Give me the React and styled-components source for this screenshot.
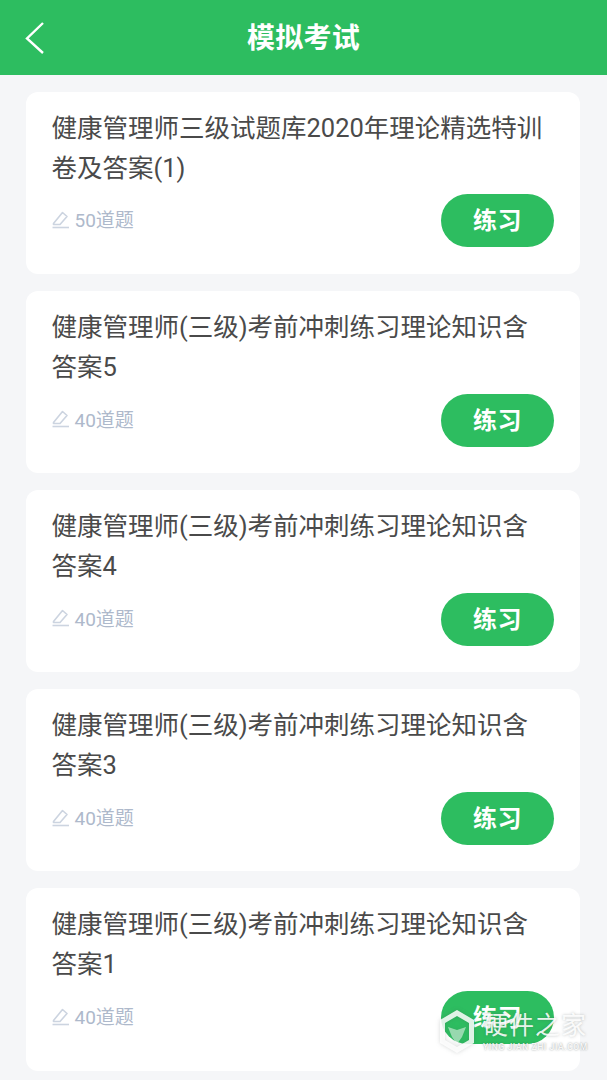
import React from 'react'
import styled, { createGlobalStyle } from 'styled-components'

const FONT = '"Roboto", "Noto Sans CJK SC", sans-serif'

const GlobalStyle = createGlobalStyle`
  html, body {
    margin: 0;
    padding: 0;
    height: 100%;
    overflow: hidden;
    background: #f5f6f8;
    font-family: ${FONT};
  }
`

const Page = styled.div`
  position: relative;
  width: 607px;
  height: 1080px;
  overflow: hidden;
  background: #f5f6f8;
`

const Header = styled.header`
  display: flex;
  align-items: center;
  justify-content: center;
  position: relative;
  height: 74.5px;
  background: #2dbd60;
`

const BackButton = styled.svg`
  position: absolute;
  left: 24px;
  top: 21px;
  width: 22px;
  height: 34px;
`

const Title = styled.h1`
  margin: 0 0 2px;
  font-size: 28px;
  font-weight: 700;
  letter-spacing: 0.3px;
  color: #fff;
`

const List = styled.main`
  display: flex;
  flex-direction: column;
  gap: 17px;
  padding: 17.2px 27px 0 26px;
`

const Card = styled.section`
  box-sizing: border-box;
  height: 182.2px;
  padding: 16px 26px 0 25.5px;
  background: #fff;
  border-radius: 12px;
`

const CardTitle = styled.div`
  padding-right: 6px;
  font-size: 25.5px;
  line-height: 40px;
  color: #4a4a4a;
`

const CardFooter = styled.div`
  display: flex;
  align-items: center;
  justify-content: space-between;
  margin-top: 6.8px;
`

const Meta = styled.div`
  display: flex;
  align-items: center;
  gap: 5px;
  margin-bottom: 4px;
  font-size: 19px;
  color: #aeb9cb;
`

const PracticeButton = styled.button`
  width: 113px;
  height: 53px;
  border: 0;
  padding: 0 0 4px;
  border-radius: 27px;
  background: #2dbd60;
  color: #fff;
  font-family: ${FONT};
  font-size: 24px;
  font-weight: 700;
  letter-spacing: 0.5px;
`

const Watermark = styled.div`
  position: absolute;
  left: 439px;
  top: 1009px;
  display: flex;
  align-items: center;
  gap: 8px;
  color: rgba(255, 255, 255, 0.9);
  text-shadow: 0 0 3px rgba(70, 80, 80, 0.35);
  pointer-events: none;
`

const WatermarkLogo = styled.svg`
  width: 36px;
  height: 45px;
  filter: drop-shadow(0 0 2px rgba(70, 80, 80, 0.25));
`

const WatermarkText = styled.div`
  display: flex;
  flex-direction: column;
  width: 104px;
`

const WatermarkName = styled.div`
  font-size: 25px;
  line-height: 30px;
  letter-spacing: 1px;
  white-space: nowrap;
`

const WatermarkUrl = styled.div`
  font-size: 8.5px;
  font-weight: 500;
  line-height: 12px;
  letter-spacing: 0.6px;
  white-space: nowrap;
  text-shadow: 0 0 2px rgba(70, 80, 80, 0.6);
`

const exams = [
  { title: '健康管理师三级试题库2020年理论精选特训卷及答案(1)', count: 50 },
  { title: '健康管理师(三级)考前冲刺练习理论知识含答案5', count: 40 },
  { title: '健康管理师(三级)考前冲刺练习理论知识含答案4', count: 40 },
  { title: '健康管理师(三级)考前冲刺练习理论知识含答案3', count: 40 },
  { title: '健康管理师(三级)考前冲刺练习理论知识含答案1', count: 40 },
]

function PenIcon () {
  return (
    <svg width="18" height="20" viewBox="0 0 18 20" fill="none" stroke="#ccd4e0" strokeWidth="1.6">
      <path d="M1.5 14.5 L10.5 3.5 L15 7.5 L8 15.5 H1.5 Z" strokeLinejoin="round" />
      <path d="M0.5 18.5 H17" />
    </svg>
  )
}

function ExamCard ({ title, count }) {
  return (
    <Card>
      <CardTitle>{title}</CardTitle>
      <CardFooter>
        <Meta>
          <PenIcon />
          {count}道题
        </Meta>
        <PracticeButton>练习</PracticeButton>
      </CardFooter>
    </Card>
  )
}

export default function App () {
  return (
    <Page>
      <GlobalStyle />
      <Header>
        <BackButton viewBox="0 0 22 34" fill="none" stroke="#fff" strokeWidth="2.4">
          <path d="M19 2 L3 17.5 L19 32" />
        </BackButton>
        <Title>模拟考试</Title>
      </Header>
      <List>
        {exams.map((exam, i) => (
          <ExamCard key={i} title={exam.title} count={exam.count} />
        ))}
      </List>
      <Watermark>
        <WatermarkLogo viewBox="0 0 36 45">
          <path d="M18 1 L35 11 V34 L18 44 L1 34 V11 Z M18 7 L6 14 V31 L18 38 L30 31 V14 Z" fill="rgba(255,255,255,0.85)" fillRule="evenodd" />
          <path d="M9 18 L18 21 L27 18 L23 28 L18 35 L13 28 Z" fill="rgba(255,255,255,0.5)" />
        </WatermarkLogo>
        <WatermarkText>
          <WatermarkName>硬件之家</WatermarkName>
          <WatermarkUrl>YING JIAN ZHI JIA.COM</WatermarkUrl>
        </WatermarkText>
      </Watermark>
    </Page>
  )
}
